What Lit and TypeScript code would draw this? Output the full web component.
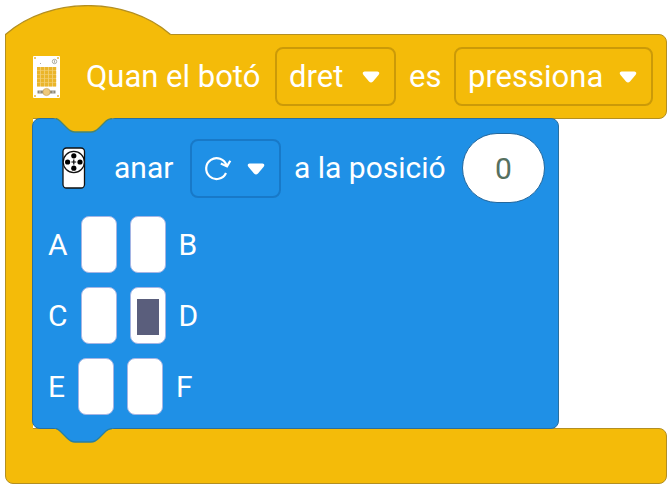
import { LitElement, html, css, svg } from "lit";
import { customElement, property } from "lit/decorators.js";

const caret = html`<svg class="caret" viewBox="0 0 20 14" aria-hidden="true">
  <path d="M3.5 1.5H16.5Q19.500 2 17.500 5L12 11.500Q10 13.500 8 11.500L2.500 5Q.5 2 3.500 1.500Z" fill="#fff"/>
</svg>`;

@customElement("braille-row")
class BrailleRow extends LitElement {
  @property() left = "";
  @property() right = "";
  @property({ type: Boolean }) marked = false;

  static styles = css`
    :host { display: flex; align-items: center; gap: 13px; height: 57px; }
    label { line-height: 36px; }
    input {
      appearance: none; box-sizing: border-box; width: 36px; height: 57px; margin: 0;
      display: grid; place-items: center; background: #fff;
      border: 1px solid #a5b5e4; border-radius: 8px;
    }
    input:checked::before { content: ""; width: 22px; height: 36px; margin-top: 3px; background: #5a5e7c; }
    .pair { display: flex; gap: 13px; }
  `;

  render() {
    return html`
      <label for="l">${this.left}</label>
      <div class="pair">
        <input id="l" type="checkbox">
        <input id="r" type="checkbox" .checked=${this.marked}>
      </div>
      <label for="r">${this.right}</label>`;
  }
}

@customElement("app-root")
class AppRoot extends LitElement {
  static styles = css`
    :host {
      display: block; padding: 5px; background: #fff; color: #fff;
      font: 400 30px/36px Roboto, "Liberation Sans", sans-serif;
      --event: #f4bb09; --event-line: #b38f22; --move: #1f90e6; --move-line: #2a6f9f;
    }
    svg { display: block; flex: none; }
    .hat { width: 168px; height: 30px; position: relative; }
    .head {
      box-sizing: border-box; height: 85px; margin-top: -1px; padding: 0 13px 0 27px;
      display: flex; align-items: center; white-space: nowrap; font-size: 31px;
      background: var(--event); border: 1px solid var(--event-line); border-radius: 0 8px 8px 0;
    }
    .phrase { margin-left: 26px; flex: none; }
    .word { width: 31px; margin: 0 14px 0 13px; flex: none; }
    .drop { position: relative; height: 59px; flex: none; }
    .drop select {
      appearance: none; box-sizing: border-box; width: 100%; height: 59px; margin: 0; padding: 0 12px;
      color: #fff; font: inherit; background: transparent;
      border: 2px solid #cb9a08; border-radius: 8px; outline: 0;
    }
    .drop .caret { position: absolute; right: 15px; top: 23px; width: 20px; height: 14px; pointer-events: none; }
    .button { width: 121px; margin-left: auto; }
    .action { width: 199px; }
    .turn { width: 91px; margin: 0 13px 0 14px; }
    .turn select { border-color: #1879c8; }
    .spin { position: absolute; left: 14px; top: 16px; width: 28px; height: 28px; pointer-events: none; }
    .body { display: flex; align-items: stretch; }
    .spine {
      box-sizing: border-box; width: 28px; flex: none; margin: -1px 0; position: relative;
      background: var(--event); border-left: 1px solid var(--event-line);
    }
    .stack {
      box-sizing: border-box; position: relative; width: 527px; flex: none; margin: -1px 0 -1px -1px;
      padding: 14px 13px 13px 15px; background: var(--move);
      border: 1px solid var(--move-line); border-radius: 8px;
    }
    .tab { position: absolute; left: 20px; width: 62px; height: 15px; }
    .tab-in { top: -1px; }
    .tab-out { bottom: -15px; }
    .move { display: flex; align-items: center; height: 70px; margin-bottom: 13px; padding-left: 14px; white-space: nowrap; }
    .verb { margin-left: 28px; width: 62px; }
    .position {
      box-sizing: border-box; width: 83px; height: 70px; margin: 0 0 0 auto; padding: 0;
      text-align: center; color: #56705f; font: inherit; background: #fff;
      border: 1px solid #24679c; border-radius: 35px; outline: 0;
    }
    .rows { display: flex; flex-direction: column; gap: 14px; }
    .foot {
      box-sizing: border-box; height: 56px; background: var(--event);
      border: 1px solid var(--event-line); border-radius: 0 8px 8px 8px;
    }
  `;

  private cardIcon() {
    const rows = [0, 1, 2, 3, 4];
    return html`<svg width="27" height="42" viewBox="0 0 27 42" aria-hidden="true">
      <rect width="27" height="42" rx="1" fill="#fff"/>
      <g fill="#e9b93c">
        <circle cx="2" cy="2" r="1"/><circle cx="25" cy="2" r="1"/>
        <circle cx="2" cy="40" r="1"/><circle cx="25" cy="40" r="1"/>
      </g>
      <rect x="4" y="11" width="19" height="19.500" fill="#f4d278"/>
      <g fill="#eab52a">
        ${rows.map((r) => rows.map((c) => svg`<rect x=${4 + c * 4} y=${11 + r * 4} width="3.200" height="3.400"/>`))}
      </g>
      <circle cx="21.500" cy="5.500" r="2.200" fill="none" stroke="#9a9a8c" stroke-width=".8"/>
      <path d="M21.500 4.300V6.700M7 7.500H8" stroke="#9a9a8c" stroke-width=".8"/>
      <path d="M4.500 36H22.500" stroke="#8d8878" stroke-width="3"/>
      <path d="M7 34.500V37.500M20 34.500V37.500" stroke="#ddd" stroke-width=".8"/>
      <circle cx="13.500" cy="36" r="3.600" fill="#efc97a" stroke="#c9a55a" stroke-width=".7"/>
    </svg>`;
  }

  private remoteIcon() {
    return html`<svg width="24" height="42" viewBox="0 0 24 42" aria-hidden="true">
      <rect x="1" y="1" width="21.500" height="40" rx="3.500" fill="#fff" stroke="#111" stroke-width="1.300"/>
      <circle cx="11.800" cy="15" r="10.600" fill="#fff" stroke="#111" stroke-width="1.200"/>
      <g fill="#000"><circle cx="11.800" cy="8.800" r="2.600"/><circle cx="11.800" cy="21.200" r="2.600"/>
        <circle cx="5.600" cy="15" r="2.600"/><circle cx="18" cy="15" r="2.600"/></g>
      <path d="M11.800 12.600V17.400M9.400 15H14.200" stroke="#000" stroke-width="1.200"/>
    </svg>`;
  }

  render() {
    return html`
      <svg class="hat" viewBox="0 0 168 30" aria-hidden="true">
        <path d="M.5 30V29.500C44 -9 122 -9 165.500 29.500V30Z" fill="#f4bb09"/>
        <path d="M.5 30V29.500C44 -9 122 -9 165.500 29.500" fill="none" stroke="#b38f22" stroke-width="1.300"/>
      </svg>
      <div class="head">
        ${this.cardIcon()}
        <span class="phrase">Quan el botó</span>
        <div class="drop button">
          <select aria-label="botó"><option>dret</option></select>${caret}
        </div>
        <span class="word">es</span>
        <div class="drop action">
          <select aria-label="acció"><option>pressiona</option></select>${caret}
        </div>
      </div>
      <div class="body">
        <div class="spine"></div>
        <div class="stack">
          <svg class="tab tab-in" viewBox="0 0 62 15" aria-hidden="true">
            <path d="M0 0L3 .5Q5 1 7 3L14 10Q18 14 22 14H38Q42 14 46 10L53 3Q55 1 59 .5L62 0Z" fill="#f4bb09"/>
            <path d="M3 .5Q5 1 7 3L14 10Q18 14 22 14H38Q42 14 46 10L53 3Q55 1 59 .5" fill="none" stroke="#4a8570" stroke-width="1.300"/>
          </svg>
          <div class="move">
            ${this.remoteIcon()}
            <span class="verb">anar</span>
            <div class="drop turn">
              <select aria-label="sentit"><option value="horari" aria-label="sentit horari"></option></select>
              <svg class="spin" viewBox="0 0 28 28" fill="none" stroke="#fff" aria-hidden="true">
                <path d="M22.500 10.500A10.400 10.400 0 1 0 22 18" stroke-width="2.200"/>
                <path d="M16.800 8.600L23 11.400L26.300 5.700" stroke-width="2.200"/>
              </svg>
              ${caret}
            </div>
            <label for="pos">a la posició</label>
            <input class="position" id="pos" type="text" value="0">
          </div>
          <div class="rows">
            <braille-row left="A" right="B"></braille-row>
            <braille-row left="C" right="D" marked></braille-row>
            <braille-row left="E" right="F"></braille-row>
          </div>
          <svg class="tab tab-out" viewBox="0 0 62 15" aria-hidden="true">
            <path d="M0 0L3 .5Q5 1 7 3L14 10Q18 14 22 14H38Q42 14 46 10L53 3Q55 1 59 .5L62 0Z" fill="#1f90e6"/>
            <path d="M3 .5Q5 1 7 3L14 10Q18 14 22 14H38Q42 14 46 10L53 3Q55 1 59 .5" fill="none" stroke="#2a7f9f" stroke-width="1.300"/>
          </svg>
        </div>
      </div>
      <div class="foot"></div>`;
  }
}
